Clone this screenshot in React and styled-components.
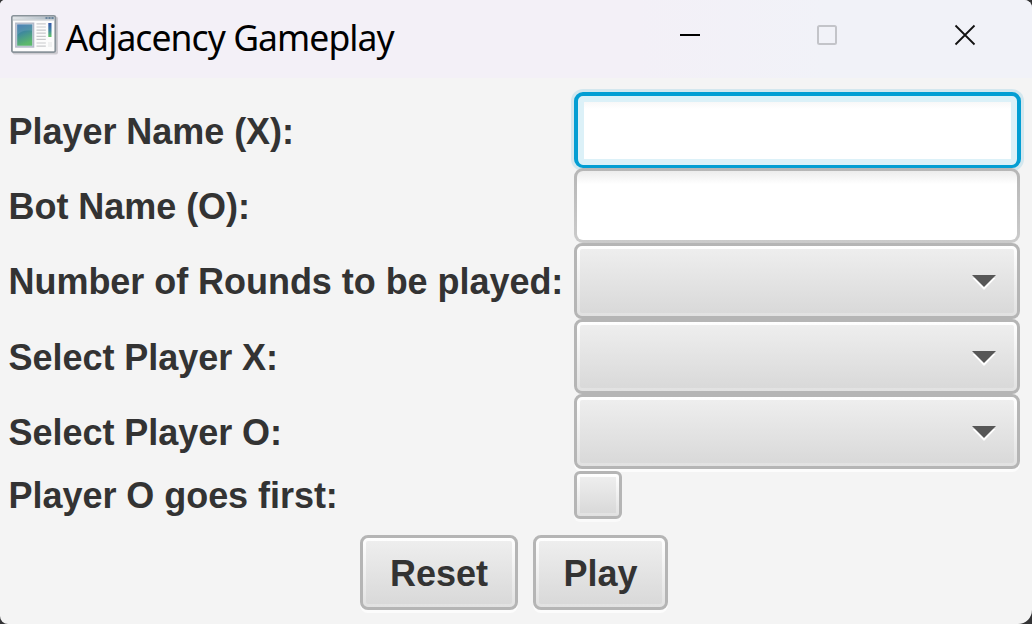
import React from "react";
import styled, { createGlobalStyle, css } from "styled-components";

const GlobalStyle = createGlobalStyle`
  * { box-sizing: border-box; }
  html, body { margin: 0; background: #343436; }
  body { overflow: hidden; }
`;

const Window = styled.main`
  width: 1032px;
  height: 624px;
  display: flex;
  flex-direction: column;
  overflow: hidden;
  background: #f4f4f4;
  border-radius: 5px 8px 14px 8px;
  color: #333;
  font-family: "Liberation Sans", Arial, sans-serif;
`;

const TitleBar = styled.header`
  flex: none;
  height: 78px;
  display: flex;
  align-items: flex-start;
  background: linear-gradient(90deg, #f3f0f7 0%, #f3f0f7 62%, #f1f2f8 80%, #f1f2f8 100%);
`;

const AppIcon = styled.svg`
  flex: none;
  display: block;
  width: 50px;
  height: 42px;
  margin: 14px 0 0 10px;
`;

const Title = styled.h1`
  flex: 1;
  margin: 13px 0 0 5.5px;
  font: 400 35.5px/48px "Noto Sans", "Open Sans", sans-serif;
  letter-spacing: -0.93px;
  color: #000;
  white-space: nowrap;
`;

const Controls = styled.nav`
  display: flex;
  margin: 25px 57px 0 0;
`;

const Control = styled.button`
  width: 20px;
  height: 20px;
  margin-left: ${(p) => p.$gap || 0}px;
  padding: 0;
  border: 0;
  background: none;
  svg { display: block; overflow: visible; }
`;

const Form = styled.form`
  display: grid;
  grid-template-columns: 566px 446px;
  grid-template-rows: 75px 75px 75.5px 75.5px 75px 51px;
  align-items: center;
  padding: 15px 12px 0 8px;
`;

const Label = styled.label`
  padding: ${(p) => p.$drop || 2}px 0 0 0.5px;
  font-size: 36px;
  font-weight: 700;
  line-height: 42px;
  letter-spacing: -0.04px;
  white-space: nowrap;
`;

const TextField = styled.input`
  width: 446px;
  height: 75px;
  padding: 0 20px;
  outline: none;
  border: 3px solid transparent;
  border-radius: 9px;
  font: 36px "Liberation Sans", sans-serif;
  background:
    linear-gradient(#ececec, #fff 13px) padding-box,
    linear-gradient(#b6b6b6, #cbcbcb) border-box;
  ${(p) => p.$focused && css`
    width: 447.5px;
    height: 76px;
    margin: -1px 0 0 -0.5px;
    border: solid #039ed3;
    border-width: 4px 4px 3px;
    padding: 6px;
    background:
      linear-gradient(#f8f8f8, #fff 7px) content-box,
      #dcf1f8;
    box-shadow: 0 0 0 3px #d3e7ee;
  `}
`;

const raised = css`
  border: 3px solid #b5b5b5;
  border-radius: 8px;
  background:
    linear-gradient(#eee, #d9d9d9) content-box,
    linear-gradient(#fff, #e1e1e1) padding-box;
  padding: 3px;
`;

const Combo = styled.div`
  ${raised}
  width: 446px;
  height: 75.5px;
  display: flex;
  align-items: center;
  justify-content: flex-end;
  box-shadow: ${(p) => (p.$last ? "0 3px 0 #fcfcfc" : "none")};
  svg { display: block; margin: ${(p) => p.$drop || 3}px 18px 0 0; }
`;

const CheckBox = styled.div`
  ${raised}
  width: 48px;
  height: 48px;
  border-radius: 6px;
  box-shadow: 0 3px 0 #fafafa;
`;

const Actions = styled.footer`
  display: flex;
  gap: 15px;
  padding: 15px 0 0 360px;
`;

const Button = styled.button`
  ${raised}
  width: ${(p) => p.$width}px;
  height: 75px;
  padding: 3px;
  color: #333;
  font: 700 36px/42px "Liberation Sans", Arial, sans-serif;
  box-shadow: 0 3px 0 #fcfcfc;
  span { display: block; padding-top: 2px; }
`;

function Arrow() {
  return (
    <svg width="24" height="15" viewBox="0 0 24 15">
      <path d="M.5 3h23L12 15z" fill="#fff" />
      <path d="M0 0h24L12 12z" fill="#575757" />
    </svg>
  );
}

function WindowIcon() {
  return (
    <AppIcon viewBox="0 0 50 42">
      <defs>
        <linearGradient id="pic" x1="0" y1="0" x2=".3" y2="1">
          <stop offset="0" stopColor="#376fae" />
          <stop offset=".45" stopColor="#3f8a9c" />
          <stop offset="1" stopColor="#5cb86c" />
        </linearGradient>
        <linearGradient id="bar" x1="0" y1="0" x2="0" y2="1">
          <stop offset="0" stopColor="#3558a8" />
          <stop offset=".5" stopColor="#3f83a4" />
          <stop offset="1" stopColor="#62c765" />
        </linearGradient>
        <linearGradient id="strip" x1="0" y1="0" x2="1" y2="0">
          <stop offset="0" stopColor="#e1e5e8" />
          <stop offset="1" stopColor="#a9b6c1" />
        </linearGradient>
      </defs>
      <rect x="2.5" y="2.5" width="45.5" height="38" rx="2" fill="#77777b" opacity=".3" />
      <rect x="1.9" y="1.9" width="43.4" height="36.2" rx="1.5" fill="#fcfcfc" stroke="#89939a" strokeWidth="1.8" />
      <path d="M2.8 2.8h41.6v2.7H2.8z" fill="url(#strip)" />
      <path d="M2.8 6h41.6" stroke="#b9c0c5" />
      <path d="M35.5 4h2m1 0h2m1 0h2" stroke="#52738f" strokeWidth="1.6" />
      <rect x="5.8" y="9.2" width="17.8" height="23.8" fill="#c9d3e2" stroke="#b4bac8" strokeWidth="1.4" />
      <rect x="7.2" y="10.5" width="15" height="21.2" fill="url(#pic)" />
      <path d="M7.2 10.5h15v6.2C15 15.7 10 17.5 7.2 21z" fill="#8fb9cf" opacity=".25" />
      <path d="M26.5 9.9h9.3m-9.3 3.1h9.3m-9.3 3.1h9.3m-9.3 3.1h9.3m-9.3 3.1h9.3m-9.3 3.1h9.3m-9.3 3.6h9.3m-9.3 3.1h9.3" stroke="#c7c9cb" strokeWidth="1.2" />
      <rect x="38.3" y="9" width="3.2" height="14" fill="url(#bar)" />
      <path d="M38 28h4v5h-4z" fill="#f0f1f1" />
    </AppIcon>
  );
}

export default function App() {
  return (
    <>
      <GlobalStyle />
      <Window>
        <TitleBar>
          <WindowIcon />
          <Title>Adjacency Gameplay</Title>
          <Controls>
            <Control aria-label="Minimize">
              <svg width="20" height="20"><path d="M0 10h20" stroke="#000" strokeWidth="2" /></svg>
            </Control>
            <Control $gap={117} aria-label="Maximize" disabled>
              <svg width="20" height="20"><rect x="1" y="1" width="18" height="18" rx="1.5" fill="none" stroke="#c3c4c9" strokeWidth="2" /></svg>
            </Control>
            <Control $gap={118} aria-label="Close">
              <svg width="20" height="20"><path d="M.5.5l19 19m0-19l-19 19" stroke="#111" strokeWidth="1.8" /></svg>
            </Control>
          </Controls>
        </TitleBar>
        <Form>
          <Label>Player Name (X):</Label>
          <TextField $focused aria-label="Player Name" />
          <Label>Bot Name (O):</Label>
          <TextField aria-label="Bot Name" />
          <Label>Number of Rounds to be played:</Label>
          <Combo><Arrow /></Combo>
          <Label $drop={4}>Select Player X:</Label>
          <Combo $drop={4}><Arrow /></Combo>
          <Label>Select Player O:</Label>
          <Combo $last><Arrow /></Combo>
          <Label>Player O goes first:</Label>
          <CheckBox />
        </Form>
        <Actions>
          <Button $width={158}><span>Reset</span></Button>
          <Button $width={135}><span>Play</span></Button>
        </Actions>
      </Window>
    </>
  );
}
